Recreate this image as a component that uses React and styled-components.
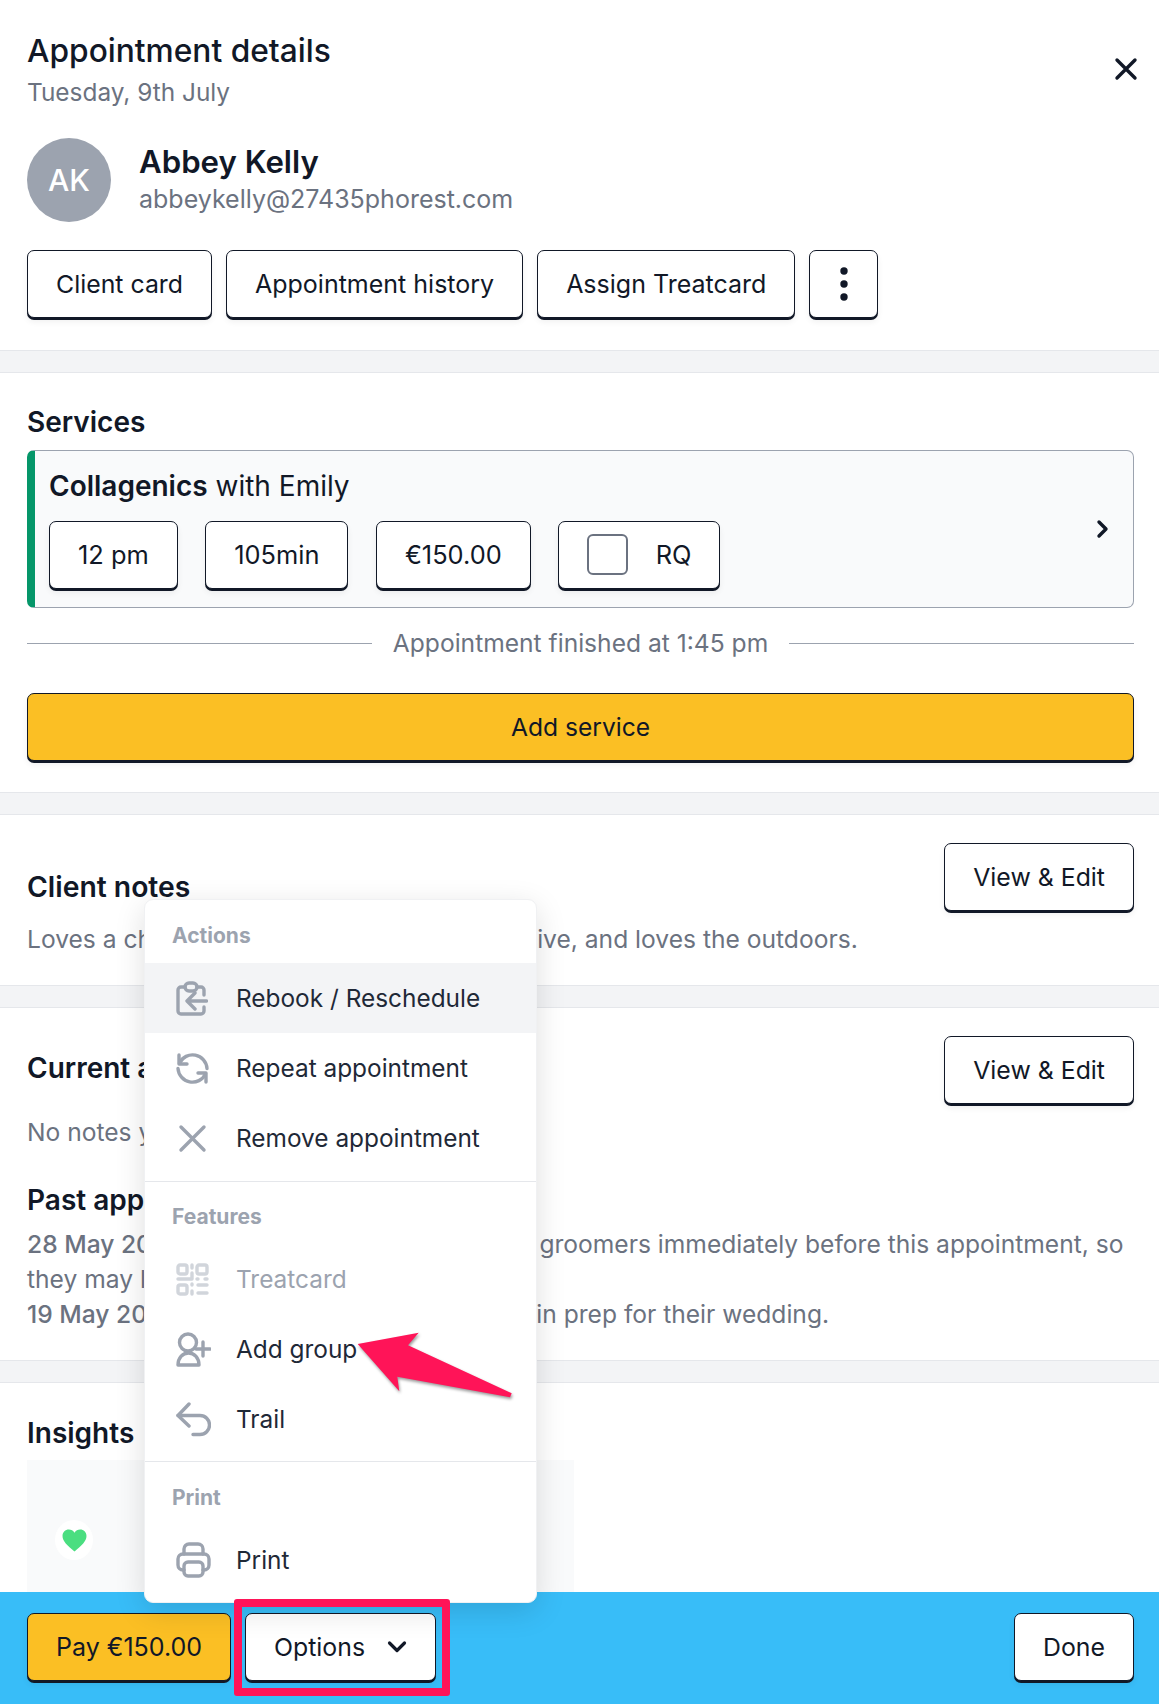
import React from "react";
import styled, { createGlobalStyle } from "styled-components";

const Global = createGlobalStyle`
  html, body { margin: 0; padding: 0; background: #fff; }
  * { box-sizing: border-box; }
  body { font-family: Inter, "Liberation Sans", sans-serif; color: #111827; }
`;

const Shell = styled.div`
  width: 1159px;
  height: 1704px;
  display: flex;
  flex-direction: column;
  overflow: hidden;
`;
const Scroll = styled.main`
  flex: 1;
  min-height: 0;
  overflow: hidden;
`;
const Band = styled.div`
  height: 23px;
  background: #f3f4f6;
  border-top: 1px solid #e5e7eb;
  border-bottom: 1px solid #e5e7eb;
`;
const Section = styled.section`
  padding: ${(p) => p.$pad || "28px 25px 30px 27px"};
`;
const HeaderRow = styled.div`
  display: flex;
  justify-content: space-between;
  align-items: center;
`;
const Title = styled.h1`
  margin: 0;
  font-size: 31.7px;
  line-height: 36px;
  font-weight: 500;
`;
const Subtitle = styled.div`
  margin-top: 7px;
  font-size: 24.4px;
  line-height: 32px;
  color: #6b7280;
`;
const CloseButton = styled.span`
  display: flex;
  margin-top: -3px;
  color: #111827;
`;
const ClientRow = styled.div`
  display: flex;
  align-items: center;
  gap: 28px;
  margin-top: 30px;
`;
const Avatar = styled.div`
  width: 84px;
  height: 84px;
  border-radius: 50%;
  background: #9ca3af;
  color: #fff;
  font-size: 30px;
  font-weight: 500;
  display: flex;
  align-items: center;
  justify-content: center;
`;
const ClientName = styled.div`
  margin-top: -3px;
  font-size: 31.2px;
  line-height: 38px;
  font-weight: 600;
`;
const ClientEmail = styled.div`
  margin-top: 2px;
  font-size: 25px;
  line-height: 32px;
  color: #6b7280;
`;
const ButtonRow = styled.div`
  display: flex;
  gap: ${(p) => p.$gap || "14px"};
  margin-top: ${(p) => p.$top || "28px"};
`;
const Button = styled.div`
  height: 68px;
  padding: 0 ${(p) => p.$pad || "28px"};
  display: inline-flex;
  align-items: center;
  justify-content: center;
  gap: ${(p) => p.$gap || "0"};
  flex-shrink: 0;
  background: ${(p) => p.$bg || "#fff"};
  border: 1.5px solid #111827;
  border-radius: 7px;
  box-shadow: 0 2px 0 #111827, 0 4px 6px rgba(0, 0, 0, 0.06);
  font-size: ${(p) => p.$size || "24.85px"};
  color: #111827;
  white-space: nowrap;
`;
const WideButton = styled(Button)`
  display: flex;
  margin-top: 34px;
`;
const Heading = styled.h2`
  margin: ${(p) => p.$top || "0"} 0 0;
  font-size: ${(p) => p.$size || "28px"};
  line-height: 34px;
  font-weight: 600;
`;
const Card = styled.div`
  margin-top: 11px;
  height: 158px;
  display: flex;
  align-items: center;
  justify-content: space-between;
  padding: 0 23px 0 14px;
  background: #f9fafb;
  border: 1px solid #9ca3af;
  border-left: 8px solid #059669;
  border-radius: 7px;
`;
const CardTitle = styled.div`
  font-size: 28px;
  line-height: 32px;
  strong { font-weight: 600; }
`;
const Checkbox = styled.span`
  width: 41px;
  height: 41px;
  border: 2.5px solid #6b7280;
  border-radius: 6px;
  background: #fff;
`;
const DividerRow = styled.div`
  margin-top: 19px;
  display: flex;
  align-items: center;
  gap: 21px;
  font-size: 24.6px;
  line-height: 32px;
  color: #6b7280;
  white-space: nowrap;
  &::before, &::after {
    content: "";
    flex: 1;
    height: 1px;
    background: #9ca3af;
  }
`;
const SplitRow = styled.div`
  display: flex;
  justify-content: space-between;
  align-items: flex-start;
`;
const Muted = styled.p`
  margin: ${(p) => p.$top || "0"} 0 0;
  font-size: 24.6px;
  line-height: ${(p) => p.$lh || "32px"};
  color: #6b7280;
  b { font-weight: 500; }
`;
const HeadBlock = styled.div`
  padding-top: ${(p) => p.$top};
`;
const InsightCard = styled.div`
  margin-top: 10px;
  width: 547px;
  height: 300px;
  padding: 60px 0 0 28px;
  background: #f9fafb;
`;
const HeartBadge = styled.div`
  width: 38px;
  height: 40px;
  border-radius: 50%;
  background: #fff;
  display: flex;
  align-items: center;
  justify-content: center;
`;
const Footer = styled.footer`
  height: 112px;
  flex-shrink: 0;
  background: #38bdf8;
  padding: 21px 25px 0 27px;
  display: flex;
  justify-content: space-between;
  align-items: flex-start;
`;
const FooterLeft = styled.div`
  display: flex;
  gap: 14px;
`;
const OptionsWrap = styled.div`
  position: relative;
`;
const Highlight = styled.div`
  position: absolute;
  inset: -14px -14px -15px -11px;
  border: 8px solid #ff1458;
  border-radius: 3px;
  z-index: 3;
`;
const Menu = styled.div`
  position: absolute;
  left: -101px;
  bottom: 78px;
  width: 393px;
  background: #fff;
  border: 1px solid #f0f1f3;
  border-radius: 9px;
  box-shadow: 0 8px 30px rgba(0, 0, 0, 0.13);
  z-index: 2;
`;
const MenuGroup = styled.div`
  padding-bottom: ${(p) => p.$bottom || "8px"};
  & + & { border-top: 1px solid #e5e7eb; }
`;
const MenuLabel = styled.div`
  padding: ${(p) => p.$top} 0 0 27px;
  height: ${(p) => p.$h};
  font-size: 21px;
  line-height: 30px;
  font-weight: 700;
  color: #9ca3af;
`;
const MenuItem = styled.div`
  height: 70px;
  display: flex;
  align-items: center;
  padding-left: 31px;
  background: ${(p) => (p.$active ? "#f3f4f6" : "transparent")};
  color: ${(p) => (p.$disabled ? "#9ca3af" : "#1f2937")};
  font-size: 24.4px;
`;
const IconSlot = styled.span`
  width: 60px;
  flex-shrink: 0;
  display: flex;
  color: ${(p) => (p.$disabled ? "#d1d5db" : "#9ca3af")};
  svg { display: block; }
`;
const ArrowMark = styled.svg`
  position: absolute;
  left: 0;
  top: 0;
  width: 393px;
  height: 600px;
  overflow: visible;
  pointer-events: none;
  filter: drop-shadow(1px 2px 1.5px rgba(0, 0, 0, 0.4));
`;

const S = { fill: "none", stroke: "currentColor", strokeWidth: 3.4, strokeLinecap: "round", strokeLinejoin: "round" };

const RebookIcon = () => (
  <svg width="32" height="35" viewBox="0 0 32 35" {...S}>
    <path d="M9 6H5a3 3 0 0 0-3 3v21a3 3 0 0 0 3 3h20a3 3 0 0 0 3-3v-4" />
    <path d="M28 14V9a3 3 0 0 0-3-3h-4" />
    <rect x="9" y="2" width="12" height="8" rx="4" />
    <path d="M30.5 20H12M19 12l-8 8 8 8" />
  </svg>
);
const RepeatIcon = () => (
  <svg width="33" height="33" viewBox="0 0 33 33" {...S}>
    <path d="M3 3v9h8" />
    <path d="M3.500 11A14.500 14.500 0 0 1 31 16.500" />
    <path d="M30 30v-9h-8" />
    <path d="M29.500 22A14.500 14.500 0 0 1 2 16.500" />
  </svg>
);
const RemoveIcon = () => (
  <svg width="33" height="33" viewBox="0 0 33 33" {...S}>
    <path d="M5 5l23 23M28 5L5 28" />
  </svg>
);
const QrIcon = () => (
  <svg width="33" height="33" viewBox="0 0 33 33" {...S}>
    <rect x="2" y="2" width="9" height="9" rx="2" />
    <rect x="21" y="2" width="10" height="9" rx="2" />
    <rect x="2" y="22" width="9" height="9" rx="2" />
    <path d="M16 2v3M16 10v6H2M21 16h1M29 16h2M16 21v1M22 22h9M22 30h9M16 28v3" />
  </svg>
);
const AddGroupIcon = () => (
  <svg width="35" height="35" viewBox="0 0 35 35" {...S}>
    <circle cx="12" cy="10.500" r="8.500" />
    <path d="M2 33c0-7 4.500-12 10.500-12s10.500 5 10.500 12z" />
    <path d="M20 17h14M27 10v14" />
  </svg>
);
const TrailIcon = () => (
  <svg width="35" height="35" viewBox="0 0 35 35" {...S}>
    <path d="M13 2L2 13.500 13 24" />
    <path d="M2 13.500h22a9.500 9.500 0 0 1 0 19h-7" />
  </svg>
);
const PrintIcon = () => (
  <svg width="35" height="36" viewBox="0 0 35 36" {...S}>
    <path d="M8 12V7a5 5 0 0 1 5-5h9a5 5 0 0 1 5 5v5" />
    <path d="M8 28H7a5 5 0 0 1-5-5v-6a5 5 0 0 1 5-5h21a5 5 0 0 1 5 5v6a5 5 0 0 1-5 5h-1" />
    <rect x="8" y="20" width="19" height="14" rx="4" />
  </svg>
);
const CloseIcon = () => (
  <svg width="24" height="24" viewBox="0 0 24 24" fill="none" stroke="currentColor" strokeWidth="3.400" strokeLinecap="round">
    <path d="M3 3l18 18M21 3L3 21" />
  </svg>
);
const DotsIcon = () => (
  <svg width="8" height="36" viewBox="0 0 8 36" fill="#111827">
    <circle cx="4" cy="5" r="3.700" />
    <circle cx="4" cy="18" r="3.700" />
    <circle cx="4" cy="31" r="3.700" />
  </svg>
);
const ChevronRight = () => (
  <svg width="14" height="20" viewBox="0 0 14 20" fill="none" stroke="#111827" strokeWidth="3.400" strokeLinecap="round" strokeLinejoin="round">
    <path d="M3 3l7 7-7 7" />
  </svg>
);
const ChevronDown = () => (
  <svg width="20" height="14" viewBox="0 0 20 14" fill="none" stroke="#111827" strokeWidth="3.200" strokeLinecap="round" strokeLinejoin="round">
    <path d="M2.500 3l7.500 7.500L17.500 3" />
  </svg>
);
const Heart = () => (
  <svg width="25" height="25" viewBox="0 0 24 24" fill="#4ade80">
    <path d="M12 22.500C5 16.500 0.500 12.700 0.500 7.600 0.500 4 3.300 1.500 6.500 1.500c2.300 0 4.300 1.100 5.500 3 1.200-1.900 3.200-3 5.500-3 3.200 0 6 2.500 6 6.100 0 5.100-4.500 8.900-11.500 14.900z" />
  </svg>
);

export default function App() {
  return (
    <Shell>
      <Global />
      <Scroll>
        <Section $pad="33px 21px 32px 27px">
          <HeaderRow>
            <div>
              <Title>Appointment details</Title>
              <Subtitle>Tuesday, 9th July</Subtitle>
            </div>
            <CloseButton><CloseIcon /></CloseButton>
          </HeaderRow>
          <ClientRow>
            <Avatar>AK</Avatar>
            <div>
              <ClientName>Abbey Kelly</ClientName>
              <ClientEmail>abbeykelly@27435phorest.com</ClientEmail>
            </div>
          </ClientRow>
          <ButtonRow>
            <Button>Client card</Button>
            <Button $size="25px">Appointment history</Button>
            <Button $size="25px">Assign Treatcard</Button>
            <Button $pad="29.500px"><DotsIcon /></Button>
          </ButtonRow>
        </Section>
        <Band />
        <Section $pad="32px 25px 31px 27px">
          <Heading>Services</Heading>
          <Card>
            <div>
              <CardTitle><strong>Collagenics</strong> with Emily</CardTitle>
              <ButtonRow $gap="27.500px" $top="19px">
                <Button $size="25.4px">12 pm</Button>
                <Button $size="25.4px">105min</Button>
                <Button $size="25.4px">€150.00</Button>
                <Button $size="25.4px" $gap="27.500px"><Checkbox />RQ</Button>
              </ButtonRow>
            </div>
            <ChevronRight />
          </Card>
          <DividerRow>Appointment finished at 1:45 pm</DividerRow>
          <WideButton $bg="#fbbf24" $size="24.6px">Add service</WideButton>
        </Section>
        <Band />
        <Section>
          <SplitRow>
            <HeadBlock $top="27px">
              <Heading $size="28.3px">Client notes</Heading>
              <Muted $top="19px">Loves a chat, is often very chatty, and talkative, and loves the outdoors.</Muted>
            </HeadBlock>
            <Button>View &amp; Edit</Button>
          </SplitRow>
        </Section>
        <Band />
        <Section $pad="28px 25px 29px 27px">
          <SplitRow>
            <HeadBlock $top="15px">
              <Heading>Current appointment notes</Heading>
              <Muted $top="31px">No notes yet</Muted>
            </HeadBlock>
            <Button>View &amp; Edit</Button>
          </SplitRow>
          <Heading $top="35px">Past appointment notes</Heading>
          <Muted $top="10px" $lh="34.800px">
            <b>28 May 2024</b> - Abbey came to visit the dog groomers immediately before this appointment, so they may look a bit tired.
            <br />
            <b>19 May 2024</b> - Abbey had a full facial mask in prep for their wedding.
          </Muted>
        </Section>
        <Band />
        <Section $pad="33px 25px 0 27px">
          <Heading>Insights</Heading>
          <InsightCard>
            <HeartBadge><Heart /></HeartBadge>
          </InsightCard>
        </Section>
      </Scroll>
      <Footer>
        <FooterLeft>
          <Button $bg="#fbbf24" $size="25px">Pay €150.00</Button>
          <OptionsWrap>
            <Highlight />
            <Button $gap="22px">Options <ChevronDown /></Button>
            <Menu>
              <MenuGroup>
                <MenuLabel $top="21px" $h="63px">Actions</MenuLabel>
                <MenuItem $active><IconSlot><RebookIcon /></IconSlot>Rebook / Reschedule</MenuItem>
                <MenuItem><IconSlot><RepeatIcon /></IconSlot>Repeat appointment</MenuItem>
                <MenuItem><IconSlot><RemoveIcon /></IconSlot>Remove appointment</MenuItem>
              </MenuGroup>
              <MenuGroup $bottom="7px">
                <MenuLabel $top="20px" $h="62px">Features</MenuLabel>
                <MenuItem $disabled><IconSlot $disabled><QrIcon /></IconSlot>Treatcard</MenuItem>
                <MenuItem><IconSlot><AddGroupIcon /></IconSlot>Add group</MenuItem>
                <MenuItem><IconSlot><TrailIcon /></IconSlot>Trail</MenuItem>
              </MenuGroup>
              <MenuGroup $bottom="7px">
                <MenuLabel $top="21px" $h="63px">Print</MenuLabel>
                <MenuItem><IconSlot><PrintIcon /></IconSlot>Print</MenuItem>
              </MenuGroup>
              <ArrowMark viewBox="0 0 393 600">
                <path fill="#ff1458" d="M212.700 444L273.700 432.700 263 445.300 366.700 493.300 365 497.300 252.300 476.700 254.300 491.300z" />
              </ArrowMark>
            </Menu>
          </OptionsWrap>
        </FooterLeft>
        <Button>Done</Button>
      </Footer>
    </Shell>
  );
}
